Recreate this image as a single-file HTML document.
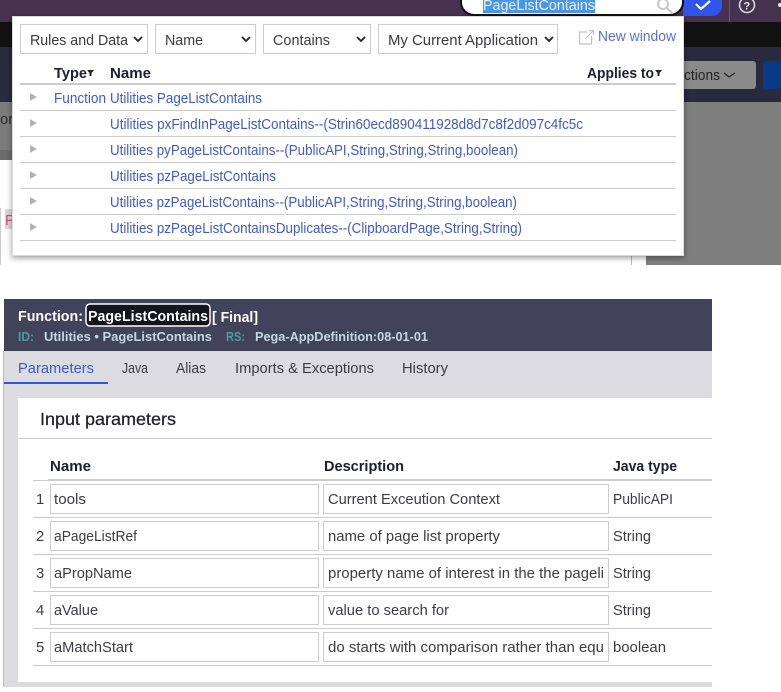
<!DOCTYPE html>
<html lang="en"><head><meta charset="utf-8"><title>PageListContains</title>
<style>
html,body{margin:0;padding:0;background:#fff;width:781px;height:692px;overflow:hidden}
svg{display:block}
text{font-family:"Liberation Sans",sans-serif;font-size:14.8px;fill:#3a3a42}
.l{fill:#3f5bc4}
.h{font-weight:bold;fill:#1d1e30}
.w{font-weight:bold;fill:#fff;font-size:15px}
.v{fill:#3c3c44}
.m{font-size:13px;font-weight:bold;fill:#c5d6e2}
.t{font-size:13px;font-weight:bold;fill:#4f9a9f}
</style></head><body>
<svg width="781" height="692" viewBox="0 0 781 692" xmlns="http://www.w3.org/2000/svg">
<defs>
<filter id="sh" x="-5%" y="-5%" width="110%" height="112%"><feDropShadow dx="0" dy="2" stdDeviation="3" flood-color="#000" flood-opacity=".4"/></filter>
</defs>
<!-- background app -->
<rect width="781" height="22" fill="#45324f"/>
<rect y="22" width="781" height="25" fill="#111"/>
<rect y="47" width="781" height="55" fill="#2a2a3e"/>
<rect y="102" width="781" height="58" fill="#7b7b7b"/>
<rect y="150" width="12" height="10" fill="#6b6b6b"/>
<rect y="160" width="646" height="105" fill="#fff"/>
<rect x="646" y="102" width="135" height="163" fill="#7e7e7e"/>
<rect x="0" y="208" width="1" height="57" fill="#ccc"/>
<rect x="631" y="240" width="1" height="25" fill="#bbb"/>
<rect x="5" y="209" width="7" height="20" fill="#d8d8d8"/>
<text x="5" y="225" style="fill:#e0457f">P</text>
<text x="0" y="124" style="fill:#2d2d2d">or</text>
<rect x="660" y="61" width="96" height="28" rx="3" fill="#8a8a8a"/>
<text x="684" y="80" textLength="36" lengthAdjust="spacingAndGlyphs" style="fill:#222">ctions</text>
<path d="M724 73l5 4 6-4" fill="none" stroke="#222" stroke-width="1.2"/>
<rect x="763" y="61" width="18" height="28" rx="3" fill="#0a3a86"/>
<!-- top bar right -->
<path d="M683 0h39v6a10 10 0 0 1-10 10h-29z" fill="#2f55ea"/>
<path d="M696 4l5 5 9-8" fill="none" stroke="#fff" stroke-width="2.2"/>
<rect x="729" y="0" width="1" height="22" fill="#6b5a76"/>
<circle cx="747" cy="5" r="7.5" fill="none" stroke="#d9d3dd" stroke-width="1.6"/>
<text x="743.500" y="9.500" style="font-size:11px;font-weight:bold;fill:#e8e4ea">?</text>
<circle cx="780" cy="5" r="2" fill="#e8e4ea"/>
<!-- search -->
<rect x="461" y="-12" width="222" height="27" rx="13" fill="#fff" stroke="#111" stroke-width="2"/>
<rect x="483" y="0" width="112" height="13" fill="#4a96e6"/>
<text x="483" y="10" textLength="112" lengthAdjust="spacingAndGlyphs" style="fill:#e8f2ff">PageListContains</text>
<circle cx="663" cy="4" r="5" fill="none" stroke="#c8c8c8" stroke-width="2"/>
<path d="M667 8l5 5" stroke="#c8c8c8" stroke-width="2"/>
<!-- popup -->
<rect x="12.500" y="16.500" width="671" height="239" fill="#fff" stroke="#ddd" filter="url(#sh)"/>
<g fill="#fff" stroke="#ccc">
<rect x="20.500" y="24.500" width="127" height="29"/>
<rect x="155.500" y="24.500" width="100" height="29"/>
<rect x="263.500" y="24.500" width="107" height="29"/>
<rect x="378.500" y="24.500" width="179" height="29"/>
</g>
<text x="30" y="45" textLength="98" lengthAdjust="spacingAndGlyphs">Rules and Data</text>
<text x="165" y="45" textLength="38" lengthAdjust="spacingAndGlyphs">Name</text>
<text x="273" y="45" textLength="57" lengthAdjust="spacingAndGlyphs">Contains</text>
<text x="388" y="45" textLength="150" lengthAdjust="spacingAndGlyphs">My Current Application</text>
<g fill="none" stroke="#222" stroke-width="1.800">
<path d="M134 37l4 4 4-4"/><path d="M242 37l4 4 4-4"/><path d="M357 37l4 4 4-4"/><path d="M545 37l4 4 4-4"/>
</g>
<g fill="none" stroke="#b9c0ea" stroke-width="1.200"><path d="M587 32h-7.500v12h12v-8"/><path d="M586 38l7-7M589 30.500h4.500v4.500"/></g>
<text x="598" y="41" textLength="78" lengthAdjust="spacingAndGlyphs" style="fill:#5c70d2">New window</text>
<text x="54" y="78" class="h" textLength="33" lengthAdjust="spacingAndGlyphs">Type</text>
<path d="M87 70h7l-2.500 3v3h-2v-3z" fill="#222"/>
<text x="110" y="78" class="h" textLength="41" lengthAdjust="spacingAndGlyphs">Name</text>
<text x="587" y="78" class="h" textLength="67" lengthAdjust="spacingAndGlyphs">Applies to</text>
<path d="M655 70h7l-2.500 3v3h-2v-3z" fill="#222"/>
<rect x="20" y="83" width="656" height="2" fill="#ccc"/>
<g fill="#ccc">
<rect x="20" y="110" width="656" height="1"/><rect x="20" y="136" width="656" height="1"/><rect x="20" y="162" width="656" height="1"/><rect x="20" y="188" width="656" height="1"/><rect x="20" y="214" width="656" height="1"/><rect x="20" y="240" width="656" height="1"/>
</g>
<g fill="#b3b3b3">
<path d="M30 93l7 4-7 4z"/><path d="M30 119l7 4-7 4z"/><path d="M30 145l7 4-7 4z"/><path d="M30 171l7 4-7 4z"/><path d="M30 197l7 4-7 4z"/><path d="M30 223l7 4-7 4z"/>
</g>
<text x="54" y="103" class="l" textLength="52" lengthAdjust="spacingAndGlyphs">Function</text>
<text x="110" y="103" class="l" textLength="152" lengthAdjust="spacingAndGlyphs">Utilities PageListContains</text>
<text x="110" y="129" class="l" textLength="473" lengthAdjust="spacingAndGlyphs">Utilities pxFindInPageListContains--(Strin60ecd890411928d8d7c8f2d097c4fc5c</text>
<text x="110" y="155" class="l" textLength="408" lengthAdjust="spacingAndGlyphs">Utilities pyPageListContains--(PublicAPI,String,String,String,boolean)</text>
<text x="110" y="181" class="l" textLength="166" lengthAdjust="spacingAndGlyphs">Utilities pzPageListContains</text>
<text x="110" y="207" class="l" textLength="407" lengthAdjust="spacingAndGlyphs">Utilities pzPageListContains--(PublicAPI,String,String,String,boolean)</text>
<text x="110" y="233" class="l" textLength="412" lengthAdjust="spacingAndGlyphs">Utilities pzPageListContainsDuplicates--(ClipboardPage,String,String)</text>
<!-- rule form -->
<rect x="4" y="299" width="708" height="52" fill="#41435a"/>
<rect x="4" y="351" width="708" height="336" fill="#dcdce0"/>
<rect x="3" y="351" width="1" height="336" fill="#bbb"/>
<text x="18" y="321" class="w" textLength="65" lengthAdjust="spacingAndGlyphs">Function:</text>
<rect x="86" y="304" width="124" height="22" rx="4" fill="#14141c" stroke="#fff" stroke-width="1.500"/>
<text x="88" y="321" class="w" textLength="120" lengthAdjust="spacingAndGlyphs">PageListContains</text>
<text x="212" y="322" class="w" textLength="46" lengthAdjust="spacingAndGlyphs">[ Final]</text>
<text x="18" y="341" class="t" textLength="16" lengthAdjust="spacingAndGlyphs">ID:</text>
<text x="44" y="341" class="m" textLength="168" lengthAdjust="spacingAndGlyphs">Utilities • PageListContains</text>
<text x="226" y="341" class="t" textLength="19" lengthAdjust="spacingAndGlyphs">RS:</text>
<text x="255" y="341" class="m" textLength="173" lengthAdjust="spacingAndGlyphs">Pega-AppDefinition:08-01-01</text>
<text x="18" y="373" textLength="76" lengthAdjust="spacingAndGlyphs" style="fill:#3f5bc4">Parameters</text>
<text x="122" y="373" textLength="26" lengthAdjust="spacingAndGlyphs">Java</text>
<text x="176" y="373" textLength="30" lengthAdjust="spacingAndGlyphs">Alias</text>
<text x="235" y="373" textLength="139" lengthAdjust="spacingAndGlyphs">Imports &amp; Exceptions</text>
<text x="402" y="373" textLength="46" lengthAdjust="spacingAndGlyphs">History</text>
<rect x="4" y="382" width="104" height="2" fill="#2f55e0"/>
<rect x="18" y="398" width="694" height="284" fill="#fff"/>
<text x="40" y="425" textLength="136" lengthAdjust="spacingAndGlyphs" style="font-size:17.5px;fill:#1f1f28;stroke:#1f1f28;stroke-width:.25px">Input parameters</text>
<rect x="18" y="438" width="694" height="1" fill="#ccc"/>
<text x="50" y="471" class="h" textLength="41" lengthAdjust="spacingAndGlyphs">Name</text>
<text x="324" y="471" class="h" textLength="80" lengthAdjust="spacingAndGlyphs">Description</text>
<text x="613" y="471" class="h" textLength="64" lengthAdjust="spacingAndGlyphs">Java type</text>
<rect x="33" y="480" width="679" height="1" fill="#ccc"/>
<rect x="48" y="479" width="664" height="2" fill="#ccc"/>
<g fill="#ccc">
<rect x="33" y="517" width="679" height="1"/><rect x="33" y="554" width="679" height="1"/><rect x="33" y="591" width="679" height="1"/><rect x="33" y="628" width="679" height="1"/><rect x="33" y="665" width="679" height="1"/>
</g>
<g fill="#fff" stroke="#ccc">
<rect x="50.500" y="484.500" width="268" height="29"/><rect x="323.500" y="484.500" width="285" height="29"/>
<rect x="50.500" y="521.500" width="268" height="29"/><rect x="323.500" y="521.500" width="285" height="29"/>
<rect x="50.500" y="558.500" width="268" height="29"/><rect x="323.500" y="558.500" width="285" height="29"/>
<rect x="50.500" y="595.500" width="268" height="29"/><rect x="323.500" y="595.500" width="285" height="29"/>
<rect x="50.500" y="632.500" width="268" height="29"/><rect x="323.500" y="632.500" width="285" height="29"/>
</g>
<text x="36" y="504" class="v">1</text><text x="36" y="541" class="v">2</text><text x="36" y="578" class="v">3</text><text x="36" y="615" class="v">4</text><text x="36" y="652" class="v">5</text>
<text x="54" y="504" class="v" textLength="32" lengthAdjust="spacingAndGlyphs">tools</text>
<text x="54" y="541" class="v" textLength="83" lengthAdjust="spacingAndGlyphs">aPageListRef</text>
<text x="54" y="578" class="v" textLength="78" lengthAdjust="spacingAndGlyphs">aPropName</text>
<text x="54" y="615" class="v" textLength="44" lengthAdjust="spacingAndGlyphs">aValue</text>
<text x="54" y="652" class="v" textLength="79" lengthAdjust="spacingAndGlyphs">aMatchStart</text>
<text x="328" y="504" class="v" textLength="172" lengthAdjust="spacingAndGlyphs">Current Exceution Context</text>
<text x="328" y="541" class="v" textLength="172" lengthAdjust="spacingAndGlyphs">name of page list property</text>
<text x="328" y="578" class="v" textLength="276" lengthAdjust="spacingAndGlyphs">property name of interest in the the pageli</text>
<text x="328" y="615" class="v" textLength="121" lengthAdjust="spacingAndGlyphs">value to search for</text>
<text x="328" y="652" class="v" textLength="276" lengthAdjust="spacingAndGlyphs">do starts with comparison rather than equ</text>
<text x="613" y="504" class="v" textLength="60" lengthAdjust="spacingAndGlyphs">PublicAPI</text>
<text x="613" y="541" class="v" textLength="38" lengthAdjust="spacingAndGlyphs">String</text>
<text x="613" y="578" class="v" textLength="38" lengthAdjust="spacingAndGlyphs">String</text>
<text x="613" y="615" class="v" textLength="38" lengthAdjust="spacingAndGlyphs">String</text>
<text x="613" y="652" class="v" textLength="53" lengthAdjust="spacingAndGlyphs">boolean</text>
</svg>
</body></html>
